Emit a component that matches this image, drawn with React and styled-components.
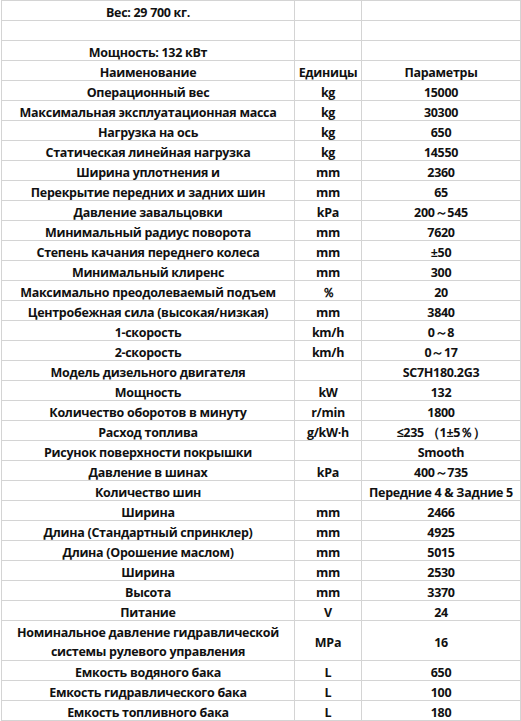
import styled, { createGlobalStyle } from "styled-components"

const GlobalStyle = createGlobalStyle`
  html, body {
    margin: 0;
    padding: 0;
    background: #ffffff;
  }
  body {
    padding-left: 1px;
    font-family: "Open Sans", "Liberation Sans", sans-serif;
  }
`

const rows = [
    { name: "Вес: 29 700 кг.", unit: "", value: "" },
    { name: "", unit: "", value: "" },
    { name: "Мощность: 132 кВт", unit: "", value: "" },
    { name: "Наименование", unit: "Единицы", value: "Параметры" },
    { name: "Операционный вес", unit: "kg", value: "15000" },
    { name: "Максимальная эксплуатационная масса", unit: "kg", value: "30300" },
    { name: "Нагрузка на ось", unit: "kg", value: "650" },
    { name: "Статическая линейная нагрузка", unit: "kg", value: "14550" },
    { name: "Ширина уплотнения и", unit: "mm", value: "2360" },
    { name: "Перекрытие передних и задних шин", unit: "mm", value: "65" },
    { name: "Давление завальцовки", unit: "kPa", value: "200～545" },
    { name: "Минимальный радиус поворота", unit: "mm", value: "7620" },
    { name: "Степень качания переднего колеса", unit: "mm", value: "±50" },
    { name: "Минимальный клиренс", unit: "mm", value: "300" },
    { name: "Максимально преодолеваемый подъем", unit: "％", value: "20" },
    { name: "Центробежная сила (высокая/низкая)", unit: "mm", value: "3840" },
    { name: "1-скорость", unit: "km/h", value: "0～8" },
    { name: "2-скорость", unit: "km/h", value: "0～17" },
    { name: "Модель дизельного двигателя", unit: "", value: "SC7H180.2G3" },
    { name: "Мощность", unit: "kW", value: "132" },
    { name: "Количество оборотов в минуту", unit: "r/min", value: "1800" },
    { name: "Расход топлива", unit: "g/kW·h", value: "≤235 （1±5％）" },
    { name: "Рисунок поверхности покрышки", unit: "", value: "Smooth" },
    { name: "Давление в шинах", unit: "kPa", value: "400～735" },
    { name: "Количество шин", unit: "", value: "Передние 4 & Задние 5" },
    { name: "Ширина", unit: "mm", value: "2466" },
    { name: "Длина (Стандартный спринклер)", unit: "mm", value: "4925" },
    { name: "Длина (Орошение маслом)", unit: "mm", value: "5015" },
    { name: "Ширина", unit: "mm", value: "2530" },
    { name: "Высота", unit: "mm", value: "3370" },
    { name: "Питание", unit: "V", value: "24" },
    { name: "Номинальное давление гидравлической\nсистемы рулевого управления", unit: "MPa", value: "16", tall: true },
    { name: "Емкость водяного бака", unit: "L", value: "650" },
    { name: "Емкость гидравлического бака", unit: "L", value: "100" },
    { name: "Емкость топливного бака", unit: "L", value: "180" },
]

export default function App() {
    return (
        <>
            <GlobalStyle />
            <Sheet>
                {rows.map((r, i) => (
                    <Row key={i} $tall={r.tall}>
                        <Cell>{r.name}</Cell>
                        <Cell>{r.unit}</Cell>
                        <Cell>{r.value}</Cell>
                    </Row>
                ))}
            </Sheet>
        </>
    )
}

const Sheet = styled.div`
    width: 520px;
    box-sizing: border-box;
    border-left: 1px solid #d4d4d4;
    border-top: 1px solid #d4d4d4;
    display: grid;
    grid-template-columns: 293px 67px 159px;
    color: #111111;
`

const Row = styled.div`
    display: contents;

    & > div {
        height: ${(p) => (p.$tall ? "40px" : "20px")};
    }
`

const Cell = styled.div`
    box-sizing: border-box;
    border-right: 1px solid #d4d4d4;
    border-bottom: 1px solid #d4d4d4;
    display: flex;
    align-items: center;
    justify-content: center;
    text-align: center;
    white-space: pre-line;
    padding-top: 3px;
    font-size: 12.5px;
    letter-spacing: -0.3px;
    font-weight: 700;
    line-height: 19px;
    overflow: hidden;
`
